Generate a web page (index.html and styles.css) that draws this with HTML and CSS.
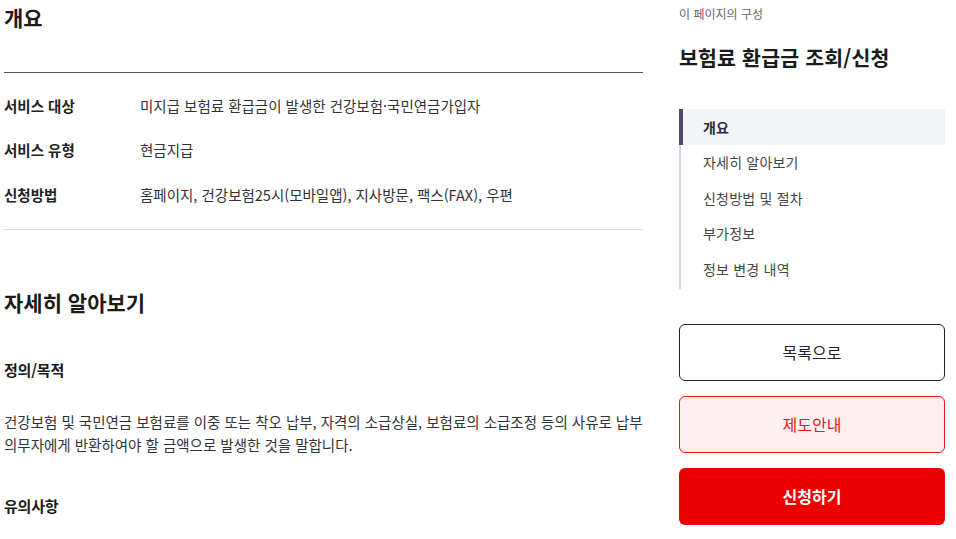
FILE: index.html
```html
<!DOCTYPE html>
<html lang="ko">
<head>
<meta charset="utf-8">
<link rel="stylesheet" href="styles.css">
</head>
<body>
<div class="page">
  <main class="main">
    <h2 class="sec-title">개요</h2>
    <div class="summary">
      <div class="row"><div class="label">서비스 대상</div><div class="value">미지급 보험료 환급금이 발생한 건강보험·국민연금가입자</div></div>
      <div class="row"><div class="label">서비스 유형</div><div class="value">현금지급</div></div>
      <div class="row"><div class="label">신청방법</div><div class="value">홈페이지, 건강보험25시(모바일앱), 지사방문, 팩스(FAX), 우편</div></div>
    </div>
    <h2 class="sec-title detail">자세히 알아보기</h2>
    <h3 class="sub-title">정의/목적</h3>
    <p class="para">건강보험 및 국민연금 보험료를 이중 또는 착오 납부, 자격의 소급상실, 보험료의 소급조정 등의 사유로 납부 의무자에게 반환하여야 할 금액으로 발생한 것을 말합니다.</p>
    <h3 class="sub-title">유의사항</h3>
  </main>
  <aside class="side">
    <div class="side-cap">이 페이지의 구성</div>
    <div class="side-title">보험료 환급금 조회/신청</div>
    <ul class="toc">
      <li class="active">개요</li>
      <li>자세히 알아보기</li>
      <li>신청방법 및 절차</li>
      <li>부가정보</li>
      <li>정보 변경 내역</li>
    </ul>
    <div class="btns">
      <a class="btn btn-line">목록으로</a>
      <a class="btn btn-soft">제도안내</a>
      <a class="btn btn-solid">신청하기</a>
    </div>
  </aside>
</div>
</body>
</html>
```
FILE: styles.css
```css
* { box-sizing: border-box; }
html, body { margin: 0; padding: 0; background: #fff; }
body {
  font-family: "Noto Sans CJK KR", "Noto Sans", sans-serif;
  color: #222;
  overflow: hidden;
}
.page {
  display: flex;
  gap: 36px;
  padding-left: 4px;
  width: 956px;
}
.main { width: 639px; flex: none; }
.sec-title {
  margin: 0;
  font-size: 21px;
  font-weight: 700;
  color: #1b1b1b;
  line-height: 30px;
  padding-top: 2px;
  letter-spacing: 0;
}
.summary {
  margin-top: 40px;
  border-top: 1px solid #555;
  border-bottom: 1px solid #ddd;
  padding: 10px 0 12px;
}
.row {
  display: flex;
  height: 44.5px;
  align-items: center;
  font-size: 14.5px;
}
.label { width: 136px; font-weight: 700; color: #222; }
.value { color: #333; }
.detail { margin-top: 55px; }
.sub-title {
  margin: 42px 0 0;
  font-size: 15px;
  font-weight: 700;
  line-height: 22px;
  color: #1b1b1b;
  letter-spacing: -0.2px;
}
.para {
  margin: 29px 0 0;
  font-size: 14.5px;
  line-height: 23px;
  color: #333;
}
.para + .sub-title { margin-top: 39px; }

.side { width: 266px; flex: none; }
.side-cap {
  font-size: 12px;
  color: #666;
  line-height: 16px;
  margin-top: 6px;
}
.side-title {
  margin-top: 21px;
  font-size: 20.5px;
  font-weight: 700;
  color: #1b1b1b;
  line-height: 28px;
  letter-spacing: 0.2px;
}
.toc {
  list-style: none;
  margin: 38px 0 0;
  padding: 0;
  border-left: 2px solid #cfd8e6;
  padding-bottom: 2px;
}
.toc li {
  height: 35.5px;
  display: flex;
  align-items: center;
  padding-left: 22px;
  font-size: 14px;
  color: #444;
  letter-spacing: 0.2px;
}
.toc li.active {
  background: #f3f4f8;
  font-weight: 700;
  color: #2a2a3a;
  margin-left: -2px;
  border-left: 4px solid #4b4a6b;
  padding-left: 20px;
}
.btns {
  margin-top: 35px;
  display: flex;
  flex-direction: column;
  gap: 15px;
}
.btn {
  display: flex;
  height: 57px;
  align-items: center;
  justify-content: center;
  border-radius: 6px;
  font-size: 16px;
}
.btn-line { border: 1px solid #222; color: #222; }
.btn-soft { border: 1px solid #e8171e; background: #fdeeef; color: #e8171e; }
.btn-solid { background: #ee0000; color: #fff; font-weight: 700; }
```
